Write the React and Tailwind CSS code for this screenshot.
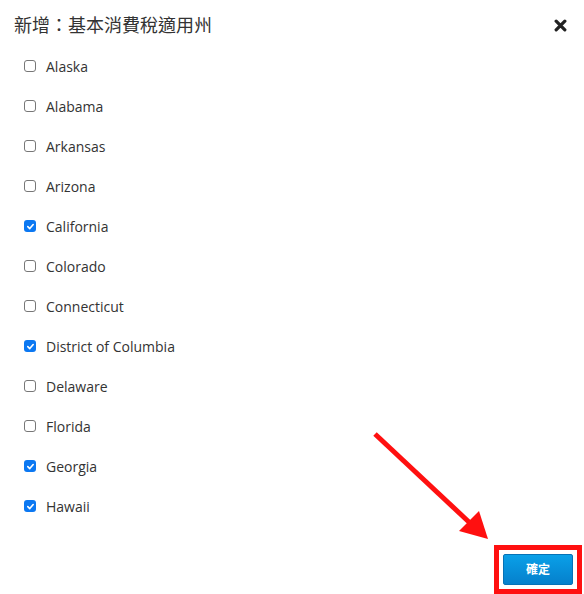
import React, { useState } from 'react';

const STATES = [
  { name: 'Alaska', checked: false },
  { name: 'Alabama', checked: false },
  { name: 'Arkansas', checked: false },
  { name: 'Arizona', checked: false },
  { name: 'California', checked: true },
  { name: 'Colorado', checked: false },
  { name: 'Connecticut', checked: false },
  { name: 'District of Columbia', checked: true },
  { name: 'Delaware', checked: false },
  { name: 'Florida', checked: false },
  { name: 'Georgia', checked: true },
  { name: 'Hawaii', checked: true },
];

function Box({ checked, onClick }) {
  if (checked) {
    return (
      <span onClick={onClick} className="w-[12px] h-[12px] rounded-[3px] bg-[#0b78f2] flex items-center justify-center shrink-0">
        <svg width="9" height="9" viewBox="0 0 10 10">
          <path d="M2 5.2 L4.2 7.3 L8 2.8" fill="none" stroke="white" strokeWidth="1.8" strokeLinecap="round" strokeLinejoin="round" />
        </svg>
      </span>
    );
  }
  return <span onClick={onClick} className="w-[12px] h-[12px] rounded-[3px] border border-[#777] bg-white shrink-0" />;
}

export default function App() {
  const [items, setItems] = useState(STATES);

  const toggle = (i) => {
    setItems(items.map((it, idx) => (idx === i ? { ...it, checked: !it.checked } : it)));
  };

  return (
    <div className="relative w-[584px] h-[594px] bg-white overflow-hidden text-[#333]" style={{ fontFamily: '"Open Sans", "Noto Sans CJK TC", sans-serif' }}>
      {/* Header */}
      <div className="flex items-center justify-between pl-[14px] pr-[16px] h-[50px]">
        <h1 className="text-[18px] text-[#333] leading-none">新增：基本消費稅適用州</h1>
        <svg width="13" height="13" viewBox="0 0 12 12" className="mr-[1px]">
          <path d="M2 2 L10 10 M10 2 L2 10" stroke="#222" strokeWidth="3" strokeLinecap="round" />
        </svg>
      </div>

      {/* List */}
      <div className="flex flex-col pl-[24px] -mt-[4px]">
        {items.map((it, i) => (
          <label key={it.name} className="flex items-center h-[40px] gap-[10px] cursor-pointer">
            <Box checked={it.checked} onClick={() => toggle(i)} />
            <span className="text-[14px] text-[#333]">{it.name}</span>
          </label>
        ))}
      </div>

      {/* Footer */}
      <div className="flex justify-end pr-[2px] pt-[19px]">
        <div className="border-[5px] border-[#ff1010] p-[4px]">
          <button className="w-[70px] h-[31px] rounded-[2px] bg-gradient-to-b from-[#0aa0e8] to-[#0680cc] border border-[#0672b6] text-white text-[12px] font-bold">
            確定
          </button>
        </div>
      </div>

      {/* Annotation arrow */}
      <svg className="absolute left-0 top-0 pointer-events-none" width="584" height="594">
        <line x1="375" y1="434" x2="470" y2="523" stroke="#ff1010" strokeWidth="5" />
        <polygon points="488,539 459,531 479,511" fill="#ff1010" />
      </svg>
    </div>
  );
}
